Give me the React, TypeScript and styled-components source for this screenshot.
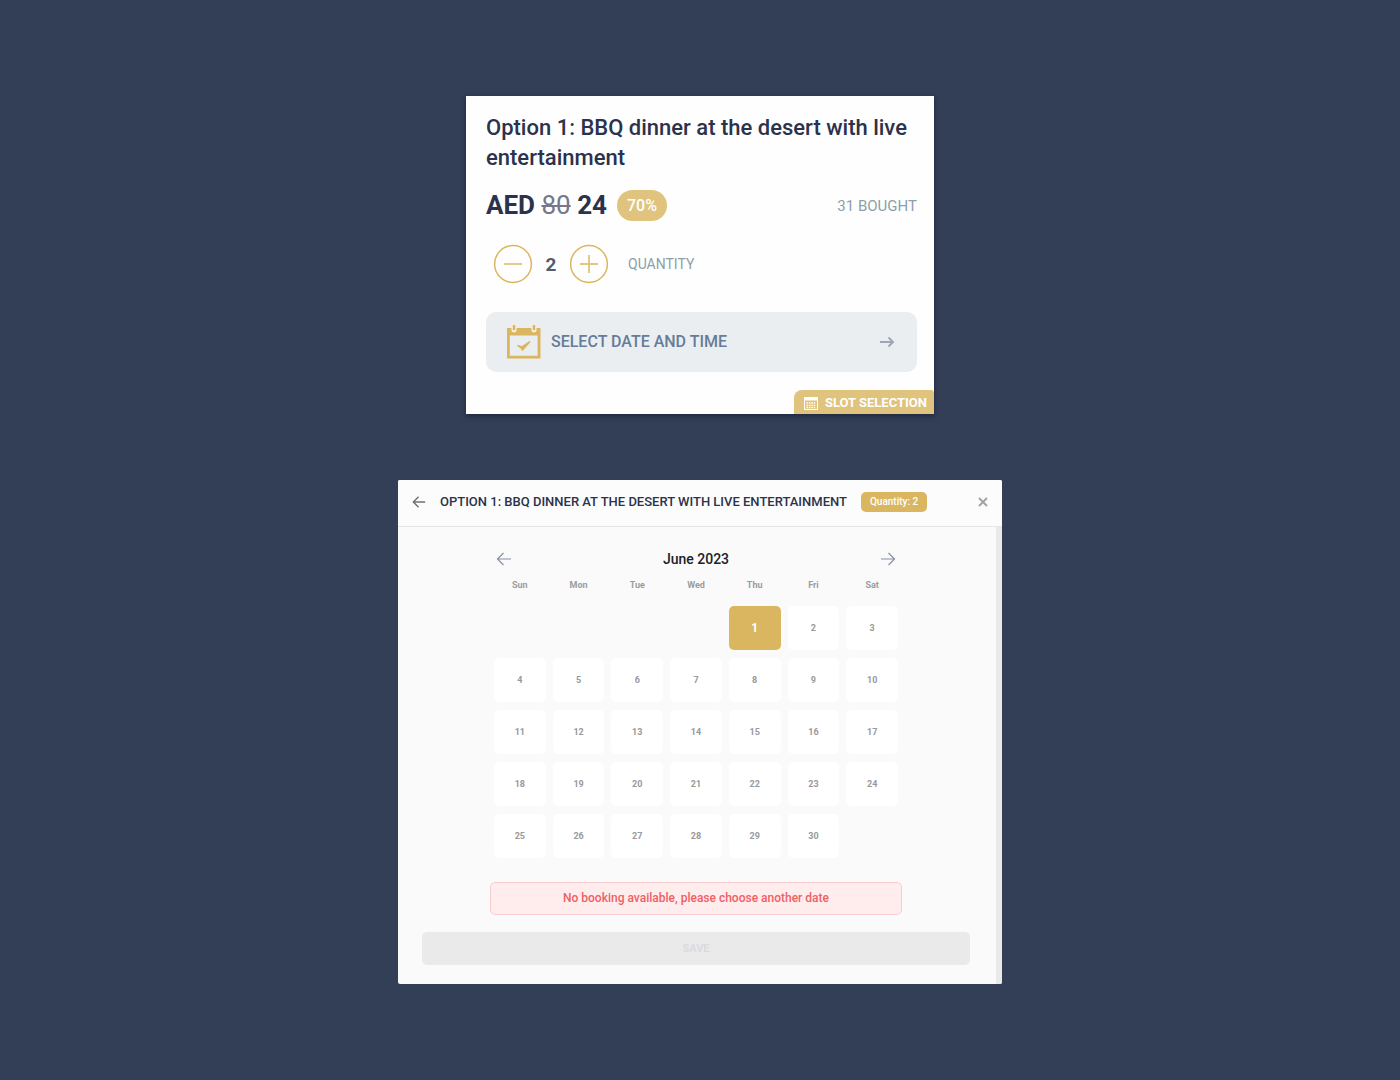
import React, { useState } from "react";
import styled, { createGlobalStyle } from "styled-components";

const colors = {
  page: "#333f57",
  gold: "#dab660",
  goldSoft: "#e0c37d",
  ink: "#2b324b",
  muted: "#8c9faa",
  slate: "#667c98",
  surface: "#fafafa",
};

const GlobalStyle = createGlobalStyle`
  *, *::before, *::after { box-sizing: border-box; }
  body {
    margin: 0;
    background: ${colors.page};
    font-family: Roboto, "Liberation Sans", sans-serif;
    color: ${colors.ink};
  }
  button {
    font: inherit;
    color: inherit;
    border: 0;
    padding: 0;
    background: none;
    cursor: pointer;
  }
  h1, h2, h3, p { margin: 0; }
  svg { display: block; flex: none; }
`;

const Page = styled.main`
  min-height: 100vh;
  display: flex;
  flex-direction: column;
  align-items: center;
  justify-content: center;
  gap: 66px;
  padding: 24px 16px;
`;

const OptionCard = styled.section`
  width: 100%;
  max-width: 468px;
  padding: 17px 17px 0 20px;
  display: flex;
  flex-direction: column;
  background: #fefefe;
  box-shadow: 0 2px 5px rgba(10, 16, 34, 0.5);
`;

const OptionTitle = styled.h1`
  font-size: 22px;
  line-height: 30px;
  font-weight: 500;
`;

const PriceRow = styled.div`
  display: flex;
  align-items: center;
  margin-top: 17px;
  height: 31px;
`;

const Price = styled.p`
  font-size: 26px;
  line-height: 31px;
  font-weight: 700;

  s {
    font-weight: 400;
    color: #74788a;
    text-decoration-thickness: 2px;
  }
`;

const Discount = styled.span`
  margin-left: 10px;
  padding: 0 10px;
  border-radius: 16px;
  background: ${colors.goldSoft};
  color: #fff;
  font-size: 16px;
  line-height: 31px;
  font-weight: 500;
`;

const Caption = styled.span<{ $size: number }>`
  font-size: ${(p) => p.$size}px;
  color: ${colors.muted};
`;

const Bought = styled(Caption)`
  margin-left: auto;
`;

const QuantityRow = styled.div`
  display: flex;
  align-items: center;
  margin-top: 23px;
  padding-left: 7px;
`;

const StepButton = styled.button`
  width: 40px;
  height: 40px;
`;

const Count = styled.output`
  width: 36px;
  text-align: center;
  font-size: 19px;
  font-weight: 700;
  color: #555b6e;
`;

const QuantityLabel = styled(Caption)`
  margin-left: 19px;
`;

const SelectButton = styled.button`
  display: flex;
  align-items: center;
  gap: 10px;
  height: 60px;
  margin-top: 28px;
  padding: 0 22px 1px 20px;
  border-radius: 10px;
  background: #ebeef1;
  color: ${colors.slate};
  font-size: 16px;
  font-weight: 500;

  svg:last-child { margin-left: auto; }
`;

const SlotTag = styled.div`
  align-self: flex-end;
  display: flex;
  align-items: center;
  gap: 7px;
  height: 24px;
  margin: 18px -17px 0 0;
  padding: 1px 7px 0 10px;
  border-radius: 8px 3px 0 0;
  background: ${colors.goldSoft};
  color: #fff;
  font-size: 13px;
  font-weight: 700;
`;

const Modal = styled.section`
  width: 100%;
  max-width: 604px;
  border-radius: 2px;
  overflow: hidden;
  background: ${colors.surface};
`;

const ModalHeader = styled.header`
  display: flex;
  align-items: center;
  gap: 14px;
  height: 47px;
  padding: 0 12px 2px 14px;
  background: #fcfcfc;
  border-bottom: 1px solid #e6e6e8;
`;

const ModalTitle = styled.h2`
  font-size: 13px;
  line-height: 20px;
  font-weight: 500;
  text-transform: uppercase;
`;

const QuantityBadge = styled.span`
  padding: 0 9px;
  border-radius: 5px;
  background: ${colors.gold};
  color: #fff;
  font-size: 10px;
  line-height: 20px;
  font-weight: 500;
`;

const CloseButton = styled.button`
  margin-left: auto;
  color: #a0a1a4;
`;

const ModalBody = styled.div`
  display: flex;
  flex-direction: column;
  padding: 21px 26px 19px 24px;
  border-right: 6px solid #e9e9ea;
`;

const Calendar = styled.div`
  width: 100%;
  max-width: 412px;
  margin: 0 auto;
`;

const MonthBar = styled.div`
  display: flex;
  align-items: center;
  justify-content: space-between;
  padding: 0 6px;
  color: #8491a3;
`;

const Month = styled.h3`
  color: #202126;
  font-size: 14px;
  line-height: 22px;
  font-weight: 500;
`;

const Week = styled.div`
  display: grid;
  grid-template-columns: repeat(7, 1fr);
  gap: 8px 7px;
  padding: 0 4px;
`;

const Weekdays = styled(Week)`
  margin: 7px 0 13px;
  text-align: center;
  font-size: 9px;
  line-height: 16px;
  font-weight: 700;
  color: #9b9ca0;
`;

const Day = styled.button<{ $selected: boolean; $start?: number }>`
  grid-column-start: ${(p) => p.$start ?? "auto"};
  height: 44px;
  border-radius: 5px;
  background: ${(p) => (p.$selected ? colors.gold : "#fff")};
  color: ${(p) => (p.$selected ? "#fff" : "#98999d")};
  font-size: ${(p) => (p.$selected ? 12 : 9)}px;
  font-weight: 700;
`;

const Alert = styled.p`
  margin-top: 24px;
  border: 1px solid #f8cdd0;
  border-radius: 5px;
  background: #ffeded;
  color: #ed6164;
  text-align: center;
  font-size: 12px;
  line-height: 31px;
  font-weight: 500;
`;

const SaveButton = styled.button`
  height: 33px;
  margin-top: 17px;
  border-radius: 5px;
  background: #eaeaeb;
  color: #d9dadc;
  font-size: 11px;
  font-weight: 700;
`;

function StepIcon({ plus = false }: { plus?: boolean }) {
  return (
    <svg width="40" height="40" viewBox="0 0 40 40" fill="none" stroke={colors.gold}>
      <circle cx="20" cy="20" r="18.4" strokeWidth="1.5" />
      <path d={plus ? "M11 20h18M20 11v18" : "M11 20h18"} strokeWidth="1.8" opacity=".8" />
    </svg>
  );
}

function CalendarCheckIcon() {
  return (
    <svg width="35" height="35" viewBox="0 0 35 35">
      <path fill={colors.gold} fillRule="evenodd" d="M1 4h33.500v30.500H1zM3.800 11.500v20.200h27.800v-20.200z" />
      <path d="M8 1v5M28 1v5" stroke="#f5eedc" strokeWidth="5" strokeLinecap="round" />
      <path d="M8 1v5M28 1v5" stroke={colors.gold} strokeWidth="2.400" />
      <path d="M11.500 21.500l3.600 2.500 1.400 2L24 17.500l-8 5.300z" fill={colors.gold} stroke={colors.gold} strokeWidth="1.400" />
    </svg>
  );
}

function BoldArrowIcon() {
  return (
    <svg width="16" height="12" viewBox="0 0 16 12" fill="none" stroke="#a0a6b7" strokeWidth="2">
      <path d="M1 6h13M9.500 1.500L14 6l-4.500 4.500" />
    </svg>
  );
}

function SlotIcon() {
  return (
    <svg width="14" height="14" viewBox="0 0 14 14" fill="none" stroke="#fff">
      <path d="M.5 1.500h13v12H.5z" />
      <path d="M0 3h14" strokeWidth="3" />
      <path d="M2.500 7h9M2.500 9.300h9M2.500 11.500h9" strokeWidth="1.300" strokeDasharray="1.600 .8" />
    </svg>
  );
}

function ThinArrow({ right = false, size = 16, color = "currentColor", weight = 1.2 }) {
  return (
    <svg width={size} height={size} viewBox="0 0 16 16" fill="none" stroke={color} strokeWidth={weight}>
      <path d={right ? "M1 8h13.500M8.500 2l6 6-6 6" : "M15 8H1.500M7.500 2l-6 6 6 6"} />
    </svg>
  );
}

function CloseIcon() {
  return (
    <svg width="14" height="14" viewBox="0 0 14 14" fill="none" stroke="currentColor" strokeWidth="1.800">
      <path d="M3 3l8 8M11 3l-8 8" />
    </svg>
  );
}

const weekdays = ["Sun", "Mon", "Tue", "Wed", "Thu", "Fri", "Sat"];
const days = Array.from({ length: 30 }, (_, i) => i + 1);

export default function App() {
  const [quantity, setQuantity] = useState(2);
  const [selected, setSelected] = useState(1);
  return (
    <>
      <GlobalStyle />
      <Page>
        <OptionCard>
          <OptionTitle>Option 1: BBQ dinner at the desert with live entertainment</OptionTitle>
          <PriceRow>
            <Price>AED <s>80</s> 24</Price>
            <Discount>70%</Discount>
            <Bought $size={15}>31 BOUGHT</Bought>
          </PriceRow>
          <QuantityRow>
            <StepButton aria-label="Decrease quantity" onClick={() => setQuantity(Math.max(1, quantity - 1))}>
              <StepIcon />
            </StepButton>
            <Count aria-labelledby="quantity-label">{quantity}</Count>
            <StepButton aria-label="Increase quantity" onClick={() => setQuantity(quantity + 1)}>
              <StepIcon plus />
            </StepButton>
            <QuantityLabel id="quantity-label" $size={14}>QUANTITY</QuantityLabel>
          </QuantityRow>
          <SelectButton>
            <CalendarCheckIcon />
            SELECT DATE AND TIME
            <BoldArrowIcon />
          </SelectButton>
          <SlotTag>
            <SlotIcon />
            SLOT SELECTION
          </SlotTag>
        </OptionCard>

        <Modal role="dialog" aria-labelledby="modal-title">
          <ModalHeader>
            <button aria-label="Back"><ThinArrow size={14} color="#6f7075" weight={1.6} /></button>
            <ModalTitle id="modal-title">Option 1: BBQ dinner at the desert with live entertainment</ModalTitle>
            <QuantityBadge>Quantity: {quantity}</QuantityBadge>
            <CloseButton aria-label="Close"><CloseIcon /></CloseButton>
          </ModalHeader>
          <ModalBody>
            <Calendar>
              <MonthBar>
                <button aria-label="Previous month"><ThinArrow /></button>
                <Month>June 2023</Month>
                <button aria-label="Next month"><ThinArrow right /></button>
              </MonthBar>
              <Weekdays>
                {weekdays.map((name) => <span key={name}>{name}</span>)}
              </Weekdays>
              <Week>
                {days.map((day) => (
                  <Day
                    key={day}
                    $selected={day === selected}
                    $start={day === 1 ? 5 : undefined}
                    aria-pressed={day === selected}
                    onClick={() => setSelected(day)}
                  >
                    {day}
                  </Day>
                ))}
              </Week>
              <Alert role="alert">No booking available, please choose another date</Alert>
            </Calendar>
            <SaveButton disabled>SAVE</SaveButton>
          </ModalBody>
        </Modal>
      </Page>
    </>
  );
}
